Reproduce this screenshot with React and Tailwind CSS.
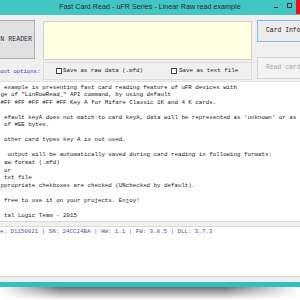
export default function App() {
  const lines = [
    " example is presenting fast card reading feature of uFR devices with",
    "ge of \"LinRowRead_\" API command, by using default",
    "#FF #FF #FF #FF #FF Key A for Mifare Classic 1K and 4 K cards.",
    "",
    " efault keyA does not match to card keyA, data will be represented as 'unknown' or as",
    " of #EE bytes.",
    "",
    " other card types key A is not used.",
    "",
    "  output will be automatically saved during card reading in following formats:",
    " aw format (.mfd)",
    " or",
    " txt file",
    "ppropriate chekboxes are checked (UNchecked by default).",
    "",
    " free to use it on your projects. Enjoy!",
    "",
    " tal Logic Team - 2015",
  ];
  return (
    <div className="w-[300px] h-[300px] overflow-hidden bg-white flex flex-col font-['Liberation_Sans',sans-serif]">
      {/* title bar */}
      <div className="h-[15px] shrink-0 bg-[#41c6c4] flex items-stretch">
        <div className="w-[27px] shrink-0" />
        <div className="flex-1 flex items-center justify-center text-[7.2px] text-[#2a2a2a] whitespace-nowrap">
          Fast Card Read - uFR Series - Linear Raw read example
        </div>
        <div className="w-[27px] shrink-0 flex items-start">
          <div className="ml-[1px] mt-[7px] w-[4px] h-[1px] bg-[#3a3a3a]" />
          <div className="ml-[9px] mt-[3px] w-[5px] h-[5px] border border-[#3a3a3a]" />
          <div className="ml-[4px] w-[4px] h-[14px] bg-[#e81123]" />
        </div>
      </div>

      {/* control area */}
      <div className="h-[66px] shrink-0 bg-[#f0f0f0] flex font-['Liberation_Mono',monospace]">
        <div className="w-[43px] shrink-0 flex flex-col">
          <div className="-ml-[16px] mt-[5px] w-[51px] h-[39px] border border-[#adadad] bg-[#e1e1e1] flex items-center justify-end pr-[2px] text-[6.6px] text-[#2b2b3b] whitespace-nowrap">
            N READER
          </div>
          <div className="mt-[9px] text-[5.6px] leading-[7px] text-[#3b3bc0] whitespace-nowrap">
            out options:
          </div>
        </div>
        <div className="w-[209px] shrink-0 flex flex-col">
          <div className="mt-[6px] h-[39px] border border-[#cfcfcf] bg-[#ffffe1]" />
          <div className="mt-[2px] h-[18px] border border-[#dcdcdc] flex items-center text-[5.8px] text-[#222]">
            <div className="ml-[12px] w-[6px] h-[6px] border border-[#444] bg-white shrink-0" />
            <div className="ml-[1px] w-[108px] shrink-0 whitespace-nowrap">Save as raw data (.mfd)</div>
            <div className="w-[6px] h-[6px] border border-[#444] bg-white shrink-0" />
            <div className="ml-[2px] whitespace-nowrap">Save as text file</div>
          </div>
        </div>
        <div className="ml-[5px] flex flex-col w-[60px] shrink-0">
          <div className="mt-[5px] h-[22px] border border-[#86b8e8] bg-[#ececec] flex items-center pl-[8px] text-[6.4px] text-[#222] whitespace-nowrap">
            Card Info
          </div>
          <div className="mt-[15px] h-[22px] border border-[#d4d4d4] bg-[#f3f3f3] flex items-center pl-[8px] text-[6.4px] text-[#a8a8a8] whitespace-nowrap">
            Read card
          </div>
        </div>
      </div>

      {/* main text */}
      <div className="h-[140px] shrink-0 border-t border-[#e2e2e2] bg-white pt-[1.5px] pl-[0.5px] font-['Liberation_Mono',monospace] text-[5.8px] leading-[7.55px] text-[#1a1a1a]">
        {lines.map((l, i) => (
          <div key={i} className="h-[7.55px] whitespace-pre">{l}</div>
        ))}
      </div>

      {/* splitter */}
      <div className="h-[6px] shrink-0 border-y border-[#d9d9d9] bg-[#f0f0f0]" />

      {/* status */}
      <div className="h-[49px] shrink-0 bg-white pt-[1px] font-['Liberation_Mono',monospace] text-[5.8px] leading-[7.55px] text-[#4f4fae] whitespace-pre">
        e: D1150021 | SN: 24CC24BA | HW: 1.1 | FW: 3.8.5 | DLL: 3.7.3
      </div>

      <div className="h-[6px] shrink-0 border-t border-[#d5d5d5] bg-[#f0f0f0]" />
      <div className="h-[5px] shrink-0 bg-[#30c0bf]" />
      <div className="h-[13px] shrink-0 bg-[linear-gradient(to_right,#ffffff,rgba(255,255,255,0)_20%,rgba(255,255,255,0)_75%,#ffffff),linear-gradient(to_bottom,rgba(60,60,60,0.75),rgba(255,255,255,0))]" />
    </div>
  );
}
